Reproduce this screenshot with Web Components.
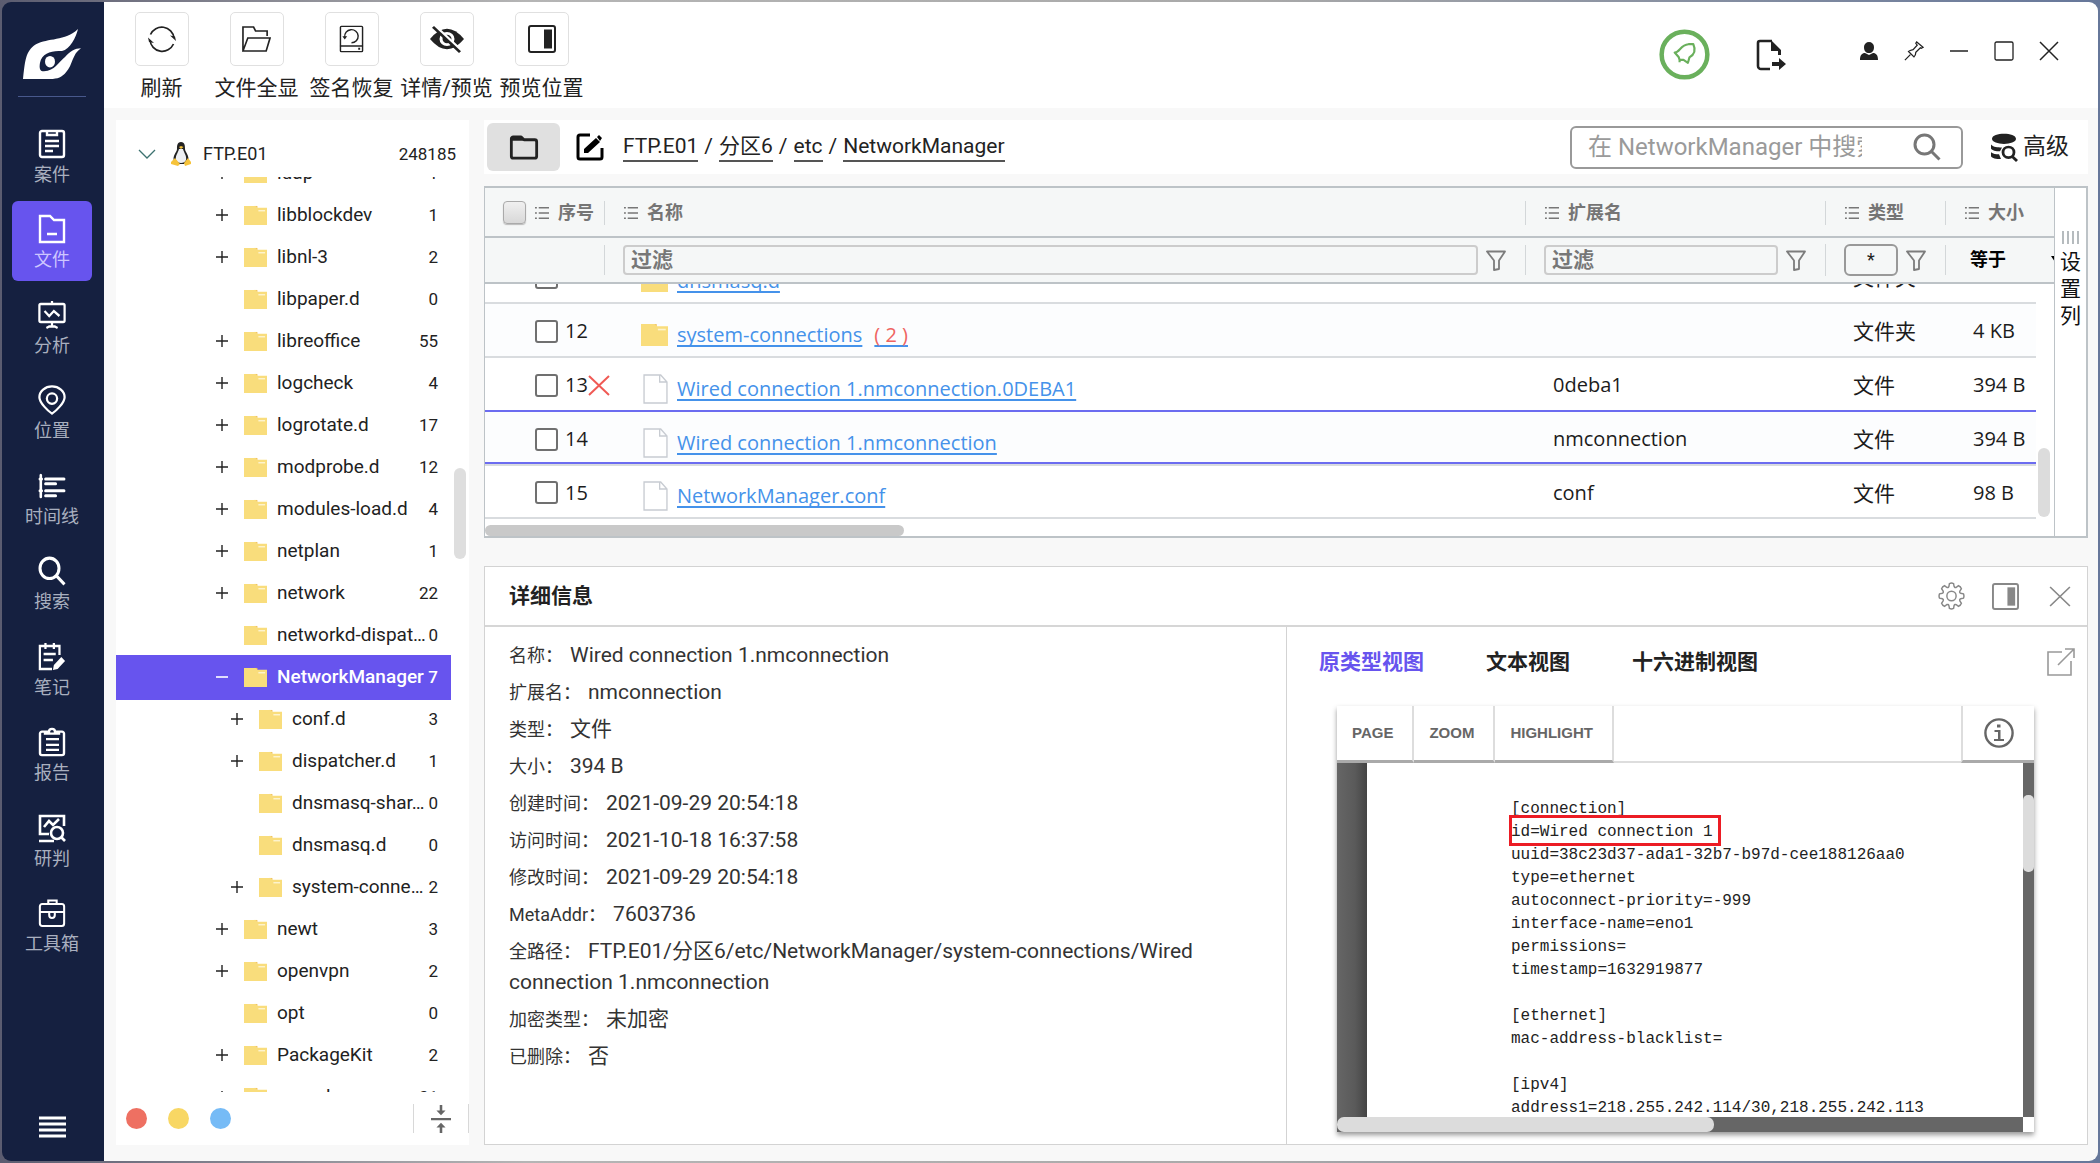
<!DOCTYPE html>
<html lang="zh-CN">
<head>
<meta charset="utf-8">
<title>NetworkManager</title>
<style>
  html, body { height: 100%; }
  body {
    margin: 0; color: #222; background: #8b8f9c;
    font: 18px/24px Roboto, "Noto Sans CJK SC", sans-serif;
    --accent: #6754ee; --line: #bdc3c7; --muted: #757575;
  }
</style>
</head>
<body>
<forensic-app></forensic-app>
<script>
const S = 'fill="none" stroke="currentColor"';
function gear() {
  let d = '';
  for (let i = 0; i < 8; i++) {
    const a = i * Math.PI / 4;
    const p = (r, o) => (14 + r * Math.sin(a + o)).toFixed(2) + ' ' + (14 - r * Math.cos(a + o)).toFixed(2);
    d += (i ? 'L' : 'M') + p(10, -.27) + 'L' + p(12.6, -.17) + 'Q' + p(13.4, 0) + ' ' + p(12.6, .17) + 'L' + p(10, .27) + 'Q' + p(8.6, .39) + ' ' + p(10, .51);
  }
  return d + 'Z';
}
const ICONS = {
  logo: ['0 0 60 54', '<path fill="#fff" fill-rule="evenodd" d="M1 53C3 36 3 24 14 17C26 10 43 14 56 1C54 10 48 22 40 24C30 23 20 26 18 36C17 42 18 45 22 45C33 44 36 36 43 30C48 24 53 21 59 21C50 27 51 38 44 46C40 51 36 53 28 53Z"/><ellipse cx="28" cy="35" rx="5" ry="6" fill="#fff"/>'],
  case: ['0 0 28 30', `<g ${S} stroke-width="2.4"><rect x="2" y="2" width="24" height="26" rx="2"/><path d="M9 1v5h10V1M7 12h14M7 17h14M7 22h8"/></g>`],
  file: ['0 0 28 30', `<path ${S} stroke-width="2.4" d="M2 2h10l4 4h10v22H2zM9 20h10"/>`],
  chart: ['0 0 30 30', `<g ${S} stroke-width="2.4"><rect x="1.5" y="4" width="27" height="18" rx="1.5"/><path d="M15 1v3M15 22v5M9 28l3-1.500h6l3 1.500M7 11l5 5 5-5 6 5"/></g>`],
  place: ['0 0 30 32', `<g ${S} stroke-width="2.4"><path d="M15 30.500C11 28 1.500 19 1.500 13a13.500 11.500 0 0 1 27 0C28.500 19 19 28 15 30.500z"/><circle cx="15" cy="14.500" r="5.500"/></g>`],
  time: ['0 0 30 28', `<path ${S} stroke-width="2.800" stroke-linecap="round" d="M3 4v20M8 7.500h20M8 12h11M8 18.500h20M8 23h11M2 7.500h2M2 18.500h2"/>`],
  search: ['0 0 28 28', `<g ${S} stroke-width="3"><circle cx="11.500" cy="11.500" r="9.500"/><path d="M18 18l8.500 8.500"/></g>`],
  note: ['0 0 30 30', `<g ${S} stroke-width="2.400"><path d="M15 27H2V4h21v9M8 1v6M17 1v6M6 12h13M6 18h10"/></g><path fill="currentColor" d="M16 28l1-5 8-8 4 4-8 8z"/>`],
  report: ['0 0 28 32', `<g ${S} stroke-width="2.400"><path d="M7 5H4a2 2 0 0 0-2 2v21a2 2 0 0 0 2 2h20a2 2 0 0 0 2-2V7a2 2 0 0 0-2-2h-3M7 7V5h4c0-4 6-4 6 0h4v2zM8 13h13M8 19h13M8 24.500h13"/></g>`],
  judge: ['0 0 28 30', `<g ${S} stroke-width="2.600"><path d="M11 21H2V3h24v10M1 28h15M6 14l5-6 4 4 6-6"/><circle cx="19" cy="20" r="6"/><path d="M23 24l4 4"/></g>`],
  tools: ['0 0 30 30', `<g ${S} stroke-width="2.200"><rect x="2" y="6" width="26" height="22" rx="2.500"/><path d="M11 6V2.500h9V6M2 14h26M12 14v3a3 3 0 0 0 6 0v-3"/></g>`],
  menu: ['0 0 27 22', `<path ${S} stroke-width="3" d="M0 2h27M0 8h27M0 14h27M0 20h27"/>`],
  refresh: ['0 0 28 28', `<path ${S} stroke-width="1.700" d="M2.500 9.500A12.300 12.300 0 0 1 26 13M25.500 19A12.300 12.300 0 0 1 2 15"/><path fill="currentColor" d="M28 16l-6-5.500 5 1zM0 12.500l6 5.500-5-1z"/>`],
  open: ['0 0 30 28', `<path ${S} stroke-width="1.700" d="M1 26V2h11l2 4h12v5M1 26l5-13h23l-4 13z"/>`],
  restore: ['0 0 26 30', `<g ${S} stroke-width="1.500"><rect x="1.500" y="1.500" width="23" height="27" rx="1"/><path d="M1 22.500h24M6 13a7 7 0 1 1 7 6"/></g><path fill="currentColor" d="M3.500 12h5L6 15.500zM20 24.500h2v2h-2z"/>`],
  hide: ['0 0 34 30', `<path fill="currentColor" d="M0 15Q17-7 34 15Q17 37 0 15"/><g ${S}><circle cx="17" cy="15" r="6" stroke="#fff" stroke-width="3"/><path stroke="#fff" stroke-width="3" d="M5 1l27 27"/><path stroke-width="2.800" d="M3 2l27 27"/></g>`],
  panel: ['0 0 28 28', `<rect ${S} x="1" y="1" width="26" height="26" rx="2" stroke-width="2"/><path fill="currentColor" d="M16 4.500h8v19h-8z"/>`],
  bell: ['0 0 52 52', `<g fill="none" stroke="#6ab05c"><circle cx="26" cy="26" r="23.300" stroke-width="4.600"/><path stroke-width="2.200" stroke-linejoin="round" d="M16 24C21 24 22 16 30 15.500L35 15.500C37.500 21 36 26 31 29L29.500 34.500L25 31.500L21 31.500L20 28.500ZM21 31v3"/></g>`],
  export: ['0 0 30 32', `<path ${S} stroke-width="2.600" d="M14 30H5a3 3 0 0 1-3-3V4a2 2 0 0 1 2-2h12"/><path fill="currentColor" d="M15 1l10 10v5h-3v-4h-7zM16 23h7v-4l7 6-7 6v-4h-7z"/>`],
  user: ['0 0 20 20', '<path fill="currentColor" d="M10 1a5 5 0 0 1 5 5c0 4-2 6-5 6s-5-2-5-6a5 5 0 0 1 5-5M1 19c0-5 2-7 5-7l4 2 4-2c3 0 5 2 5 7z"/>'],
  pin: ['0 0 22 22', `<path ${S} stroke-width="1.400" d="M14 1l7 6-2 1-1-.500-5 5c0 3-1 4-2 5l-6-6c2-1.500 3-1.500 5-2l4.500-5-1.500-2zM7 15l-6 6"/>`],
  min: ['0 0 20 20', `<path ${S} stroke-width="1.500" d="M1 10h18"/>`],
  max: ['0 0 20 20', `<rect ${S} x="1" y="1" width="18" height="18" rx="1.500" stroke-width="1.300"/>`],
  close: ['0 0 20 20', `<path ${S} stroke-width="1.500" d="M1 1l18 18M19 1L1 19"/>`],
  chevron: ['0 0 18 10', `<path fill="none" stroke="#3d7270" stroke-width="1.300" d="M1 1l8 8 8-8"/>`],
  tux: ['0 0 20 24', '<path fill="#222" d="M10 0c4 0 4 4 4 7s5 7 3 12l-4 3H7l-4-3C1 14 6 10 6 7s0-7 4-7"/><path fill="#eef0f4" d="M8 7h4c1 4 4 7 3 11s-9 4-10 0S7 11 8 7"/><path fill="#f6c33b" d="M8 5l2-1 2.500 1L10 7zM0 20l4-4 5 6-2 2-7-2zM20 20l-3-4-4 5 1 3 6-2z"/>'],
  plus: ['0 0 12 12', `<path ${S} stroke-width="1.400" d="M0 6h12M6 0v12"/>`],
  minus: ['0 0 12 12', `<path ${S} stroke-width="1.600" d="M-1 6h14"/>`],
  folder: ['0 0 24 22', '<path fill="#f0c060" d="M10 1h4v3h-4z"/><path fill="#f9dd7c" d="M0 1h12l2 2h10v18H0z"/><path stroke="#fdf3cd" stroke-width="1.500" d="M15 6h7"/>'],
  doc: ['0 0 24 30', '<path fill="#fff" stroke="#c8ccd2" stroke-width="1.300" d="M1 1h16l6 7v21H1zM16 1v7h7"/>'],
  collapse: ['0 0 22 30', '<path fill="#666" d="M0 14h22v2.400H0zM9.600 0h2.800v6H16l-5 5-5-5h3.600zM9.600 30h2.800v-6H16l-5-5-5 5h3.600z"/>'],
  folderline: ['0 0 32 26', `<path ${S} stroke-width="3" stroke-linejoin="round" d="M2.500 4v18a2 2 0 0 0 2 2h23a2 2 0 0 0 2-2V7a2 2 0 0 0-2-2H16l-3-3H4.500a2 2 0 0 0-2 2z"/><path fill="currentColor" d="M2 2h11l3 4H2z"/>`],
  edit: ['0 0 28 28', `<path ${S} stroke-width="3" d="M14 2H4a2 2 0 0 0-2 2v20a2 2 0 0 0 2 2h20a2 2 0 0 0 2-2v-9"/><path fill="currentColor" d="M8 20v-4L20 5l4 4-12 11zM21 4l2-2 3 3-2 3z"/>`],
  adv: ['0 0 28 30', `<path fill="currentColor" d="M2 6C2-1 26-1 26 6C26 13 2 13 2 6M1 12c3 3 6 3 11 3l-2 4C6 19 2 18 1 16zM1 20c2 2 5 2 8 2l2 5C6 27 2 26 1 24z"/><g ${S} stroke-width="2.800"><circle cx="18.500" cy="20" r="5.500"/><path d="M22 24l5 5"/></g>`],
  list: ['0 0 15 12', '<path fill="#777" d="M4 0h11v1.400H4zM4 5.300h11v1.400H4zM4 10.600h11V12H4zM0 0h2v1.600H0zM0 5.200h2v1.600H0zM0 10.400h2V12H0z"/>'],
  funnel: ['0 0 20 21', '<path fill="none" stroke="#7c7c7c" stroke-width="1.800" stroke-linejoin="round" d="M1 1.500h18l-6 9V19l-5 1v-9.500z"/>'],
  arrow: ['0 0 12 9', '<path fill="#000" d="M0 0h12L6 9z"/>'],
  del: ['0 0 22 21', '<path fill="none" stroke="#f05a55" stroke-width="2" d="M1 1l20 19M21 1L1 20"/>'],
  grip: ['0 0 17 13', '<path stroke="#8f979c" stroke-width="1.300" d="M1 0v13M6 0v13M11 0v13M16 0v13"/>'],
  gear: ['0 0 28 28', `<path ${S} stroke-width="1.500" d="${gear()}"/><circle ${S} cx="14" cy="14" r="4.800" stroke-width="1.500"/>`],
  popout: ['0 0 28 28', `<path ${S} stroke-width="1.600" d="M15 4H1v23h23V13M18 1h9v9M27 1L11 17"/>`],
  info: ['0 0 30 30', `<circle ${S} cx="15" cy="15" r="13.600" stroke-width="2.400"/><path fill="currentColor" d="M13 6.500h3.500v3H13zM10.500 12h6v9h3.500v2H10v-2h4v-7h-3.500z"/>`]
};

const define = (name, css, html, ready) => {
  const tpl = document.createElement('template');
  tpl.innerHTML = `<style>:host,*{box-sizing:border-box}button{font:inherit;color:inherit;background:none;border:0;padding:0;cursor:pointer}input,select{font:inherit}${css}</style>${typeof html === 'string' ? html : ''}`;
  customElements.define(name, class extends HTMLElement {
    constructor() { super(); this.attachShadow({ mode: 'open' }); }
    connectedCallback() {
      this.shadowRoot.replaceChildren(tpl.content.cloneNode(true));
      if (typeof html === 'function') this.shadowRoot.innerHTML += html(this);
      if (ready) ready(this);
    }
  });
};
const icon = (n, w, h = w) => `<ui-icon name="${n}" w="${w}" h="${h}"></ui-icon>`;

define('ui-icon', ':host{display:block;flex:none}svg{display:block}', el => {
  const [box, body] = ICONS[el.getAttribute('name')];
  return `<svg viewBox="${box}" width="${el.getAttribute('w')}" height="${el.getAttribute('h')}" preserveAspectRatio="none" aria-hidden="true">${body}</svg>`;
});

define('nav-item', `
  :host{display:block}
  a{display:flex;flex-direction:column;align-items:center;justify-content:center;gap:4px;height:80px;padding-top:4px;border-radius:6px;color:#fff;text-decoration:none}
  span{color:#a9afbf;line-height:24px}
  :host([active]) a{background:var(--accent)}
  :host([active]) span{color:#cdc6ff}`,
  el => `<a href="#">${icon(el.getAttribute('icon'), 28, 30)}<span><slot></slot></span></a>`);

define('side-nav', `
  :host{display:flex;flex-direction:column;background:#152040;width:102px;flex:none;padding:26px 12px 23px 10px;border-radius:9px 0 0 9px}
  header{display:flex;flex-direction:column;align-items:center;gap:16px;height:88px}
  header::after{content:"";width:68px;height:1px;background:#48588c}
  nav{flex:1;display:flex;flex-direction:column;justify-content:space-between}
  footer{display:flex;justify-content:center;margin-top:151px}
  button{color:#fff}`,
  `<header>${icon('logo', 60, 52)}</header>
  <nav>
  <nav-item icon="case">案件</nav-item><nav-item icon="file" active>文件</nav-item><nav-item icon="chart">分析</nav-item>
  <nav-item icon="place">位置</nav-item><nav-item icon="time">时间线</nav-item><nav-item icon="search">搜索</nav-item>
  <nav-item icon="note">笔记</nav-item><nav-item icon="report">报告</nav-item><nav-item icon="judge">研判</nav-item>
  <nav-item icon="tools">工具箱</nav-item></nav>
  <footer><button aria-label="菜单">${icon('menu', 27, 22)}</button></footer>`);

define('tool-button', `
  :host{display:block;flex:0 0 95px}
  button{display:flex;flex-direction:column;align-items:center;gap:7px;width:100%;font-size:21px;line-height:30px;white-space:nowrap}
  i{display:flex;align-items:center;justify-content:center;width:54px;height:54px;border:1px solid #e0e0e0;border-radius:5px}`,
  el => `<button><i>${icon(el.getAttribute('icon'), +el.getAttribute('w'), 28)}</i><span><slot></slot></span></button>`);

define('top-bar', `
  :host{display:flex;height:106px;flex:none;background:#fff;padding:0 39px 0 10px;border-radius:0 9px 0 0}
  .tools{display:flex;flex:1;padding-top:10px}
  .status,.win{display:flex;align-items:center}
  .status{height:105px;gap:46px;margin-right:73px}
  .win{height:98px;gap:25px}`,
  `<div class="tools"><tool-button icon="refresh" w="28">刷新</tool-button><tool-button icon="open" w="29">文件全显</tool-button>
  <tool-button icon="restore" w="25">签名恢复</tool-button><tool-button icon="hide" w="34">详情/预览</tool-button><tool-button icon="panel" w="28">预览位置</tool-button></div>
  <div class="status"><button aria-label="通知">${icon('bell', 51)}</button><button aria-label="导出">${icon('export', 30, 32)}</button></div>
  <div class="win"><button aria-label="用户">${icon('user', 20)}</button><button aria-label="置顶">${icon('pin', 20)}</button><button aria-label="最小化">${icon('min', 20)}</button><button aria-label="最大化">${icon('max', 20)}</button><button aria-label="关闭">${icon('close', 20)}</button></div>`);

define('tree-item', `
  :host{display:flex;align-items:center;height:42px;padding:0 13px 0 100px;font-size:19px;line-height:26px}
  :host([child]){padding-left:115px}
  .t{width:12px;margin-right:16px;flex:none}
  .n{flex:1;min-width:0;margin-left:10px;white-space:nowrap}
  .c{font-size:17px}
  :host([selected]){position:relative;background:var(--accent);color:#fff;font-weight:500;box-shadow:0 -1px var(--accent),0 2px var(--accent)}`,
  el => `<span class="t">${el.getAttribute('t') ? icon(el.getAttribute('t'), 12) : ''}</span>${icon('folder', 23, 21)}<span class="n"><slot></slot></span><span class="c">${el.getAttribute('count')}</span>`);

const TREE = [['ldap',1,'plus'],['libblockdev',1,'plus'],['libnl-3',2,'plus'],['libpaper.d',0,''],['libreoffice',55,'plus'],['logcheck',4,'plus'],['logrotate.d',17,'plus'],['modprobe.d',12,'plus'],['modules-load.d',4,'plus'],['netplan',1,'plus'],['network',22,'plus'],['networkd-dispat…',0,''],['NetworkManager',7,'minus','selected'],['conf.d',3,'plus','child'],['dispatcher.d',1,'plus','child'],['dnsmasq-shar…',0,'','child'],['dnsmasq.d',0,'','child'],['system-conne…',2,'plus','child'],['newt',3,'plus'],['openvpn',2,'plus'],['opt',0,''],['PackageKit',2,'plus'],['pam.d',31,'plus']];

define('file-tree', `
  :host{display:flex;flex-direction:column;background:#fff;width:353px;flex:none;min-height:0}
  header{display:flex;align-items:center;height:57px;padding:10px 13px 0 22px;flex:none}
  header ui-icon+ui-icon{margin:0 12px 0 15px}
  header b{flex:1;font-weight:400}
  header span{font-size:17px}
  .body{flex:1;min-height:0;display:flex}
  .list{flex:1;min-width:0;overflow:hidden}
  .bar{width:12px;height:91px;margin:291px 3px 0;border-radius:6px;background:#dedede}
  footer{display:flex;align-items:center;gap:21px;height:53px;padding-left:10px;flex:none}
  .d{width:21px;height:21px;border-radius:50%;background:#ee7062}
  .d+.d{background:#f8d764}.d+.d+.d{background:#76bbf6}
  footer .fold{margin-left:auto;height:29px;padding:0 17px;border:solid #d8d8d8;border-width:0 1px}`,
  `<header>${icon('chevron', 18, 10)}${icon('tux', 20, 24)}<b>FTP.E01</b><span>248185</span></header>
  <div class="body"><div class="list">${TREE.map(r => `<tree-item t="${r[2]}" count="${r[1]}" ${r[3] || ''}>${r[0]}</tree-item>`).join('')}</div><div class="bar"></div></div>
  <footer><button class="d" aria-label="红"></button><button class="d" aria-label="黄"></button><button class="d" aria-label="蓝"></button><button class="fold" aria-label="折叠">${icon('collapse', 20, 28)}</button></footer>`,
  el => { el.shadowRoot.querySelector('.list').scrollTop = 25; });

define('path-bar', `
  :host{display:flex;align-items:center;height:54px;background:#fff;padding:0 19px 0 3px;font-size:21px;line-height:28px}
  .f{display:flex;align-items:center;justify-content:center;width:73px;height:48px;background:#e0e0e0;border-radius:6px;margin-right:16px}
  .e{color:#000}
  nav{flex:1;display:flex;gap:6px;margin-left:19px}
  nav a{color:inherit;text-decoration:none;border-bottom:2px solid #555}
  label{display:flex;align-items:center;width:393px;height:43px;border:2px solid #999;border-radius:6px;padding:0 20px 0 16px}
  input{flex:1;min-width:0;border:0;outline:0;background:none;padding:0;margin-right:51px;font-size:24px;line-height:32px}
  input::placeholder{color:#9a9a9a}
  label ui-icon{color:#777}
  .a{display:flex;align-items:center;gap:5px;margin-left:27px;font-size:23px}`,
  `<button class="f" aria-label="文件夹">${icon('folderline', 30, 25)}</button><button class="e" aria-label="编辑">${icon('edit', 28)}</button>
  <nav><a href="#">FTP.E01</a><span>/</span><a href="#">分区6</a><span>/</span><a href="#">etc</a><span>/</span><a href="#">NetworkManager</a></nav>
  <label><input type="text" aria-label="搜索" placeholder="在 NetworkManager 中搜索">${icon('search', 28)}</label>
  <button class="a">${icon('adv', 28, 29)}高级</button>`);

const ROWS = [[11,'dnsmasq.d','folder','','文件夹','4 KB'],[12,'system-connections','folder','','文件夹','4 KB'],[13,'Wired connection 1.nmconnection.0DEBA1','doc','0deba1','文件','394 B'],[14,'Wired connection 1.nmconnection','doc','nmconnection','文件','394 B'],[15,'NetworkManager.conf','doc','conf','文件','98 B']];
const head = t => `<span class="h">${icon('list', 14, 12)}${t}</span>`;

define('file-table', `
  :host{display:flex;height:352px;background:#fff;border:2px solid var(--line);border-width:2px 2px 2px 1px}
  main{flex:1;min-width:0;display:flex;flex-direction:column;border-right:1px solid var(--line)}
  table{width:100%;table-layout:fixed;border-collapse:separate;border-spacing:0}
  td,th{padding:0;text-align:left}
  .c1{width:119px}.c3{width:300px}.c4{width:120px}.c5{width:109px}.body .c5{width:91px}
  .head{background:#f5f7f7}
  .head tr:first-child>*{height:50px;border-bottom:2px solid var(--line);color:var(--muted);padding-top:1px}
  .head tr+tr>*{height:46px;border-bottom:2px solid var(--line);overflow:hidden}
  .cell,.h{display:flex;align-items:center}
  .h{gap:9px;line-height:24px}
  .cell{height:30px;padding-left:19px;border-left:1px solid #d3d7d9}
  th .cell{height:24px}
  tr>:first-child .cell{border:0;padding-left:18px;gap:9px}
  .head input[type=checkbox]{appearance:none;margin:0;width:23px;height:23px;border:1px solid #aaa;border-radius:4px;background:linear-gradient(#f0f0f0,#d8d8d8);box-shadow:0 1px 1px #bbb}
  td .cell{padding-left:18px}
  .head input[type=text]{flex:1;min-width:0;height:30px;border:2px solid #ccc;border-radius:4px;background:#f5f7f7;font-size:21px;font-weight:700;padding:0 6px;margin:0}
  input::placeholder{color:#777;opacity:1}
  .cell button{margin:0 19px 0 8px}
  .cell .star{flex:1;height:32px;margin:0;border:2px solid #999;border-radius:6px;line-height:24px}
  .ty .cell{height:32px}
  select{appearance:none;border:0;background:none;font-weight:700;font-size:18px;padding:0;color:#000;flex:0 0 81px;margin-left:6px}
  .body{flex:1;height:235px;overflow:hidden;padding-right:18px;font-family:"Open Sans","Noto Sans CJK SC",sans-serif;font-size:20px;line-height:28px;color:#1c1c1c;display:flex;align-items:flex-end}
  .wrap{display:flex;flex:none;position:relative}
  .body td{height:54px;border-bottom:2px solid #d9dcdf;white-space:nowrap;padding-top:2px}
  .body tr:nth-child(even) td{background:#fcfdfe}
  .body tr.up td{border-color:#6c6cf0}
  .body tr.sel td{box-shadow:inset 0 -2px #6c6cf0}
  .body tr:last-child td{height:53px}
  .num{display:flex;align-items:center;height:28px;padding-left:50px}
  .num input{appearance:none;flex:none;width:23px;height:23px;margin:0 7px 0 0;border:2px solid #707070;border-radius:3px;background:#fff}
  .nm{display:flex;align-items:center;padding:7px 0 0 37px;height:37px}
  .nm ui-icon{margin-right:9px}
  .nm .doc{margin:0 9px 0 2px}
  .nm a{color:#4592ea;text-underline-offset:3px;text-decoration-thickness:2px;text-decoration-skip-ink:none}
  .nm a+a{margin-left:12px}
  .nm em{font-style:normal;color:#ef6461}
  .body td:nth-child(n+3){padding-left:28px}
  .body td:nth-child(4){font-size:21px}
  .v{position:absolute;right:4px;bottom:2px;width:12px;height:69px;border-radius:6px;background:#dcdcdc}
  .hs{height:12px;width:419px;margin-top:6px;border-radius:6px;background:#c9c9c9}
  aside{width:31px;flex:none;display:flex;flex-direction:column;align-items:center;padding-top:43px;gap:5px}
  aside button{width:21px;font-size:21px;line-height:27px;color:#111}`,
  `<main>
  <table class="head"><colgroup><col class="c1"><col><col class="c3"><col class="c4"><col class="c5"></colgroup>
  <tr><th><div class="cell"><input type="checkbox" aria-label="全选">${head('序号')}</div></th><th><div class="cell">${head('名称')}</div></th><th><div class="cell">${head('扩展名')}</div></th><th><div class="cell">${head('类型')}</div></th><th><div class="cell">${head('大小')}</div></th></tr>
  <tr><td></td><td><div class="cell"><input type="text" placeholder="过滤" aria-label="过滤名称"><button aria-label="筛选名称">${icon('funnel', 20, 21)}</button></div></td>
  <td><div class="cell"><input type="text" placeholder="过滤" aria-label="过滤扩展名"><button aria-label="筛选扩展名">${icon('funnel', 20, 21)}</button></div></td>
  <td class="ty"><div class="cell"><button class="star">*</button><button aria-label="筛选类型">${icon('funnel', 20, 21)}</button></div></td>
  <td><div class="cell"><select aria-label="大小条件"><option>等于</option></select>${icon('arrow', 12, 9)}</div></td></tr></table>
  <div class="wrap"><div class="body"><table><colgroup><col class="c1"><col><col class="c3"><col class="c4"><col class="c5"></colgroup>
  ${ROWS.map(r => `<tr class="${r[0] === 13 ? 'up' : r[0] === 14 ? 'sel' : ''}"><td><div class="num"><input type="checkbox" aria-label="选择 ${r[0]}">${r[0]}${r[0] === 13 ? icon('del', 22, 21) : ''}</div></td>
  <td><div class="nm">${r[2] === 'doc' ? '<ui-icon class="doc" name="doc" w="25" h="30"></ui-icon>' : icon('folder', 27, 24)}<a href="#">${r[1]}</a>${r[0] === 12 ? '<a href="#"><em>( 2 )</em></a>' : ''}</div></td><td>${r[3]}</td><td>${r[4]}</td><td>${r[5]}</td></tr>`).join('')}
  </table></div><div class="v"></div></div><div class="hs"></div></main>
  <aside>${icon('grip', 17, 13)}<button>设置列</button></aside>`);

const INFO = [['名称','Wired connection 1.nmconnection'],['扩展名','nmconnection'],['类型','文件'],['大小','394 B'],['创建时间','2021-09-29 20:54:18'],['访问时间','2021-10-18 16:37:58'],['修改时间','2021-09-29 20:54:18'],['MetaAddr','7603736'],['全路径','FTP.E01/分区6/etc/NetworkManager/system-connections/Wired connection 1.nmconnection'],['加密类型','未加密'],['已删除','否']];

define('detail-info', `
  :host{display:block;padding:13px 85px 0 24px;color:#333}
  dl{margin:0}
  div{margin-bottom:6px;line-height:31px}
  dt,dd{display:inline;margin:0}
  dd{font-size:21px;margin-left:7px}`,
  `<dl>${INFO.map(([k, v]) => `<div><dt>${k}：</dt><dd>${v}</dd></div>`).join('')}</dl>`);

define('text-viewer', `
  :host{display:flex;flex-direction:column;box-shadow:0 3px 5px #999;background:#fff;min-height:0}
  .tb{display:flex;height:57px;font:700 15px/20px "Liberation Sans",sans-serif;color:#666;flex:none}
  .tb button{border-right:2px solid #ddd;border-bottom:3px solid #aaa;padding:0 19px 0 15px}
  .tb span{flex:1;border-bottom:2px solid #ddd}
  .tb .i{border-right:0;border-left:2px solid #ddd;padding:0 20px 0 21px}
  .view{flex:1;min-height:0;display:flex;background:#666}
  .view::before{content:"";width:30px;background:linear-gradient(90deg,#666,#5a5a5a 60%,#444)}
  .page{flex:1;min-width:0;overflow:hidden;background:#fff}
  pre{margin:0;padding:35px 0 0 144px;font:16px/23px "Liberation Mono","Noto Sans CJK SC",monospace;color:#222}
  mark{position:relative;background:none;color:inherit}
  mark::after{content:"";position:absolute;inset:-8px -8px -5px -2px;border:3px solid #ec1c24}
  .v{width:11px}
  .v::before{content:"";display:block;margin-top:32px;height:77px;border-radius:5px;background:#dcdcdc}
  .h{height:15px;flex:none;background:#666;border-right:11px solid #fff}
  .h::before{content:"";display:block;width:55%;height:15px;border-radius:7px;background:#dcdcdc}`,
  `<div class="tb"><button>PAGE</button><button>ZOOM</button><button>HIGHLIGHT</button><span></span><button class="i" aria-label="信息">${icon('info', 30)}</button></div>
  <div class="view"><div class="page"><pre>[connection]
<mark>id=Wired connection 1</mark>
uuid=38c23d37-ada1-32b7-b97d-cee188126aa0
type=ethernet
autoconnect-priority=-999
interface-name=eno1
permissions=
timestamp=1632919877

[ethernet]
mac-address-blacklist=

[ipv4]
address1=218.255.242.114/30,218.255.242.113</pre></div><div class="v"></div></div><div class="h"></div>`);

define('detail-panel', `
  :host{display:flex;flex-direction:column;flex:1;min-height:0;background:#fff;border:1px solid #d3d3d3}
  header{display:flex;align-items:center;gap:27px;height:60px;padding:0 14px 0 24px;border-bottom:2px solid #d6d6d6;color:#888;flex:none}
  header button{display:flex;justify-content:center;width:27px}
  h2{margin:0 auto 0 0;font-size:21px;line-height:28px;color:#222}
  .cols{flex:1;min-height:0;display:grid;grid-template:minmax(0,1fr)/minmax(0,1fr) minmax(0,1fr)}
  section{border-left:1px solid #d3d3d3;display:flex;flex-direction:column;min-height:0}
  .tabs{display:flex;align-items:center;gap:62px;height:70px;padding:0 12px 0 32px;font-size:21px;line-height:28px;font-weight:700;flex:none}
  .tabs .on{color:var(--accent)}
  .tabs :last-child{margin-left:auto;color:#999}
  text-viewer{flex:1;margin:9px 53px 12px 50px}`,
  `<header><h2>详细信息</h2><button aria-label="设置">${icon('gear', 27, 28)}</button><button aria-label="预览位置">${icon('panel', 27)}</button><button aria-label="关闭">${icon('close', 22, 21)}</button></header>
  <div class="cols"><detail-info></detail-info><section><div class="tabs"><button class="on">原类型视图</button><button>文本视图</button><button>十六进制视图</button><button aria-label="弹出">${icon('popout', 28)}</button></div><text-viewer></text-viewer></section></div>`);

define('forensic-app', `
  :host{display:flex;height:100vh;padding:2px;background:linear-gradient(90deg,#5b5c70,#b5b5b5 25%,#a9a9a9 60%,#66779a)}
  .win{flex:1;min-width:0;display:flex;flex-direction:column}
  .work{flex:1;min-height:0;display:flex;gap:15px;padding:12px 10px 16px 12px;background:#f8f8f8;border-radius:0 0 9px 0}
  .main{flex:1;min-width:0;display:flex;flex-direction:column}
  file-table{margin:12px 0 28px;flex:none}
  path-bar{flex:none}`,
  `<side-nav></side-nav><div class="win"><top-bar></top-bar><div class="work"><file-tree></file-tree><div class="main"><path-bar></path-bar><file-table></file-table><detail-panel></detail-panel></div></div></div>`);
</script>
</body>
</html>
